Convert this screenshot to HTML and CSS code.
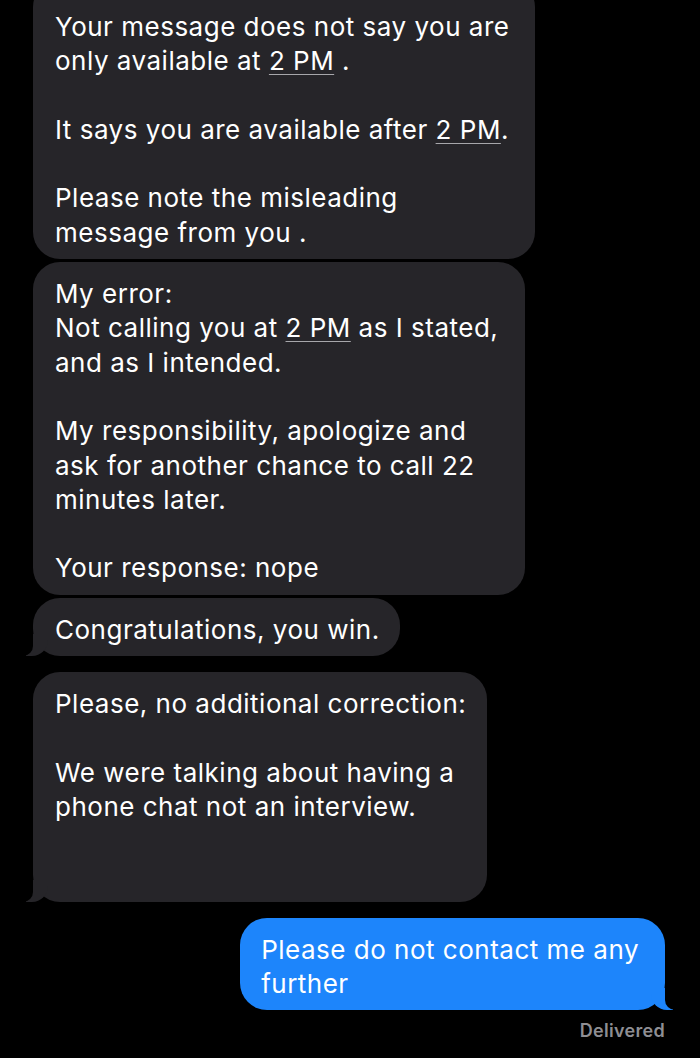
FILE: index.html
```html
<!DOCTYPE html>
<html lang="en">
<head>
    <meta charset="UTF-8">
    <meta name="viewport" content="width=device-width, initial-scale=1.0">
    <title>Messages</title>
    <link rel="stylesheet" href="styles.css">
</head>
<body>
    <div class="thread">
        <div class="group">
            <div class="bubble them first wide">
                Your message does not say you are<br>
                only available at <u>2 PM</u> .<br>
                <br>
                It says you are available after <u>2 PM</u>.<br>
                <br>
                Please note the misleading<br>
                message from you .
            </div>
            <div class="bubble them mid">
                My error:<br>
                Not calling you at <u>2 PM</u> as I stated,<br>
                and as I intended.<br>
                <br>
                My responsibility, apologize and<br>
                ask for another chance to call 22<br>
                minutes later.<br>
                <br>
                Your response: nope
            </div>
            <div class="bubble them tail short">
                Congratulations, you win.
            </div>
        </div>

        <div class="group">
            <div class="bubble them tail long">
                Please, no additional correction:<br>
                <br>
                We were talking about having a<br>
                phone chat not an interview.<br>
                <br>
                &nbsp;
            </div>
        </div>

        <div class="group mine">
            <div class="bubble me tail">
                Please do not contact me any<br>
                further
            </div>
            <div class="status">Delivered</div>
        </div>
    </div>
</body>
</html>
```

FILE: styles.css
```css
body {
    margin: 0;
    background: #000;
    font-family: "Inter", "Liberation Sans", sans-serif;
    color: #fff;
    overflow: hidden;
}

.thread {
    display: flex;
    flex-direction: column;
    gap: 16px;
    padding: 0 35px 0 33px;
    margin-top: -20px;
}

.group {
    display: flex;
    flex-direction: column;
    align-items: flex-start;
    gap: 3px;
}

.group.mine {
    align-items: flex-end;
    gap: 10px;
}

.bubble {
    position: relative;
    box-sizing: border-box;
    padding: 15px 22px 9px 22px;
    border-radius: 27px;
    font-size: 26px;
    letter-spacing: 0.5px;
    line-height: 34.3px;
    white-space: nowrap;
}

.bubble u {
    text-decoration-color: #a7a7ab;
    text-decoration-thickness: 1px;
    text-underline-offset: 4px;
}

.them {
    background: #262529;
}

.me {
    background: #1d85fb;
    padding-left: 21px;
    padding-right: 26px;
}

.first {
    padding-top: 30px;
}

.wide { width: 502px; }
.mid { width: 492px; }
.short { width: 367px; }
.long { width: 454px; }

/* speech tail: coloured hook, then a black cut-out over it */
.tail::before,
.tail::after {
    content: "";
    position: absolute;
    bottom: 0;
    height: 22px;
}

.them.tail::before {
    left: -7px;
    width: 22px;
    background: #262529;
    border-bottom-right-radius: 16px;
}

.them.tail::after {
    left: -10px;
    width: 10px;
    background: #000;
    border-bottom-right-radius: 10px;
}

.me.tail::before {
    right: -8px;
    width: 22px;
    background: #1d85fb;
    border-bottom-left-radius: 16px;
}

.me.tail::after {
    right: -10px;
    width: 10px;
    background: #000;
    border-bottom-left-radius: 10px;
}

.status {
    font-size: 18px;
    font-weight: 600;
    letter-spacing: 0.3px;
    color: #8e8e93;
    padding-right: 0;
}
```
